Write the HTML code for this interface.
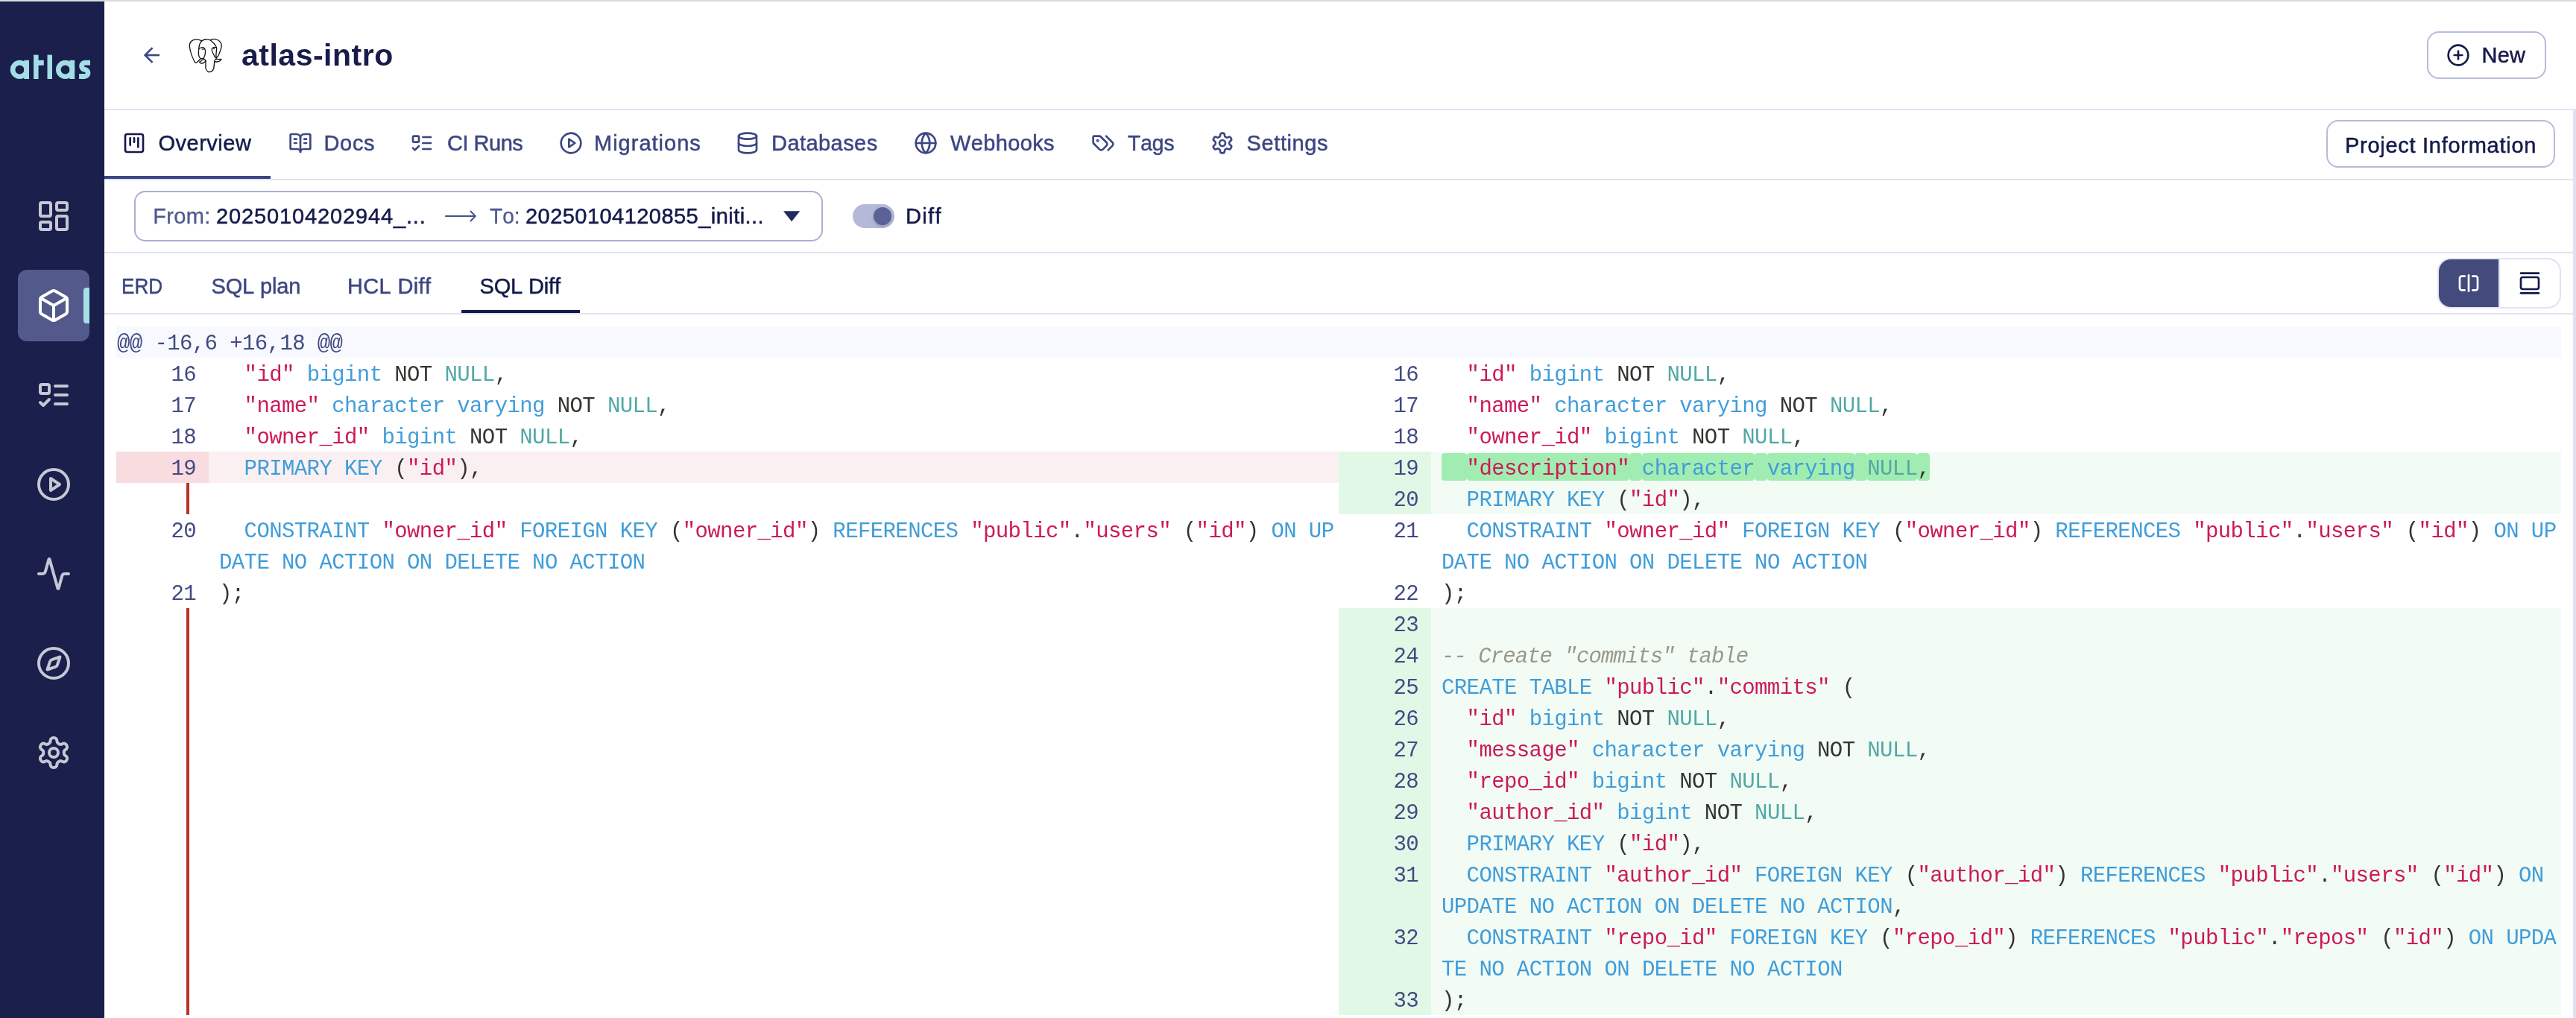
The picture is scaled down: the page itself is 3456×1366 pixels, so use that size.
<!DOCTYPE html><html><head><meta charset="utf-8"><title>atlas-intro</title><style>

html,body{margin:0;padding:0;background:#fff;}
body{width:3456px;height:1366px;overflow:hidden;position:relative;font-family:"Liberation Sans",sans-serif;}
.a{position:absolute;}
.t{position:absolute;white-space:pre;font-kerning:none;line-height:80px;font-family:"Liberation Sans",sans-serif;}
svg{position:absolute;overflow:visible;}
.ic{fill:none;stroke-linecap:round;stroke-linejoin:round;stroke-width:2;}
.hl{position:absolute;height:1px;left:140px;background:#e1e3f3;}
.row{position:absolute;left:156px;width:3280px;}
.g{position:absolute;top:0;height:100%;width:124px;}
.c{position:absolute;top:0;height:100%;width:1516px;}
.n{position:absolute;top:0;right:17px;text-align:right;}
.m{font-family:"Liberation Mono",monospace;font-size:29px;letter-spacing:-0.6028px;line-height:42px;white-space:pre;font-kerning:none;}
.code{position:absolute;left:14px;top:3px;color:#33352f;}
.k{color:#419dd9}.s{color:#cc195a}.o{color:#33352f}.b{color:#52a8a6}.cm{color:#99998a;font-style:italic;letter-spacing:-0.9528px}

</style></head><body><div id="w" style="position:absolute;left:0;top:0;width:3456px;height:1366px;will-change:transform">
<div class="a" style="left:0;top:0;width:3456px;height:2px;background:#dadada"></div>
<div class="a" style="left:0;top:2px;width:140px;height:1364px;background:#1a1f4b"></div>
<svg style="left:0;top:0" width="140" height="140" viewBox="0 0 140 140">
<g fill="none" stroke="#a3dde6" stroke-width="6.6">
<circle cx="26.4" cy="93.4" r="9.3"/><circle cx="87.6" cy="93.4" r="9.3"/>
<path stroke-width="6.8" d="M121 84.2H114.2A4.58 4.58 0 0 0 112.4 93L115.2 93.7A4.58 4.58 0 0 1 113.4 102.5H106.1"/>
</g>
<g fill="#a3dde6">
<rect x="32.3" y="80.8" width="6.7" height="25.2"/><rect x="93.5" y="80.8" width="6.7" height="25.2"/>
<rect x="45.1" y="73.6" width="6.5" height="32.4"/><rect x="45.1" y="80.8" width="13.7" height="6.9"/>
<rect x="63.5" y="73.6" width="6.5" height="32.4"/>
</g></svg>
<div class="a" style="left:24px;top:362px;width:96px;height:96px;border-radius:12px;background:#535a8b"></div>
<div class="a" style="left:112px;top:386px;width:8px;height:48px;border-radius:4px 0 0 4px;background:#a5dfe8"></div>
<svg class="ic" style="left:48px;top:266px;stroke:#c5c7d3;color:#c5c7d3;stroke-width:2" width="48" height="48" viewBox="0 0 24 24"><rect width="7" height="9" x="3" y="3" rx="1"/><rect width="7" height="5" x="14" y="3" rx="1"/><rect width="7" height="9" x="14" y="12" rx="1"/><rect width="7" height="5" x="3" y="16" rx="1"/></svg>
<svg class="ic" style="left:48px;top:386px;stroke:#ffffff;color:#ffffff;stroke-width:2" width="48" height="48" viewBox="0 0 24 24"><path d="M21 8a2 2 0 0 0-1-1.73l-7-4a2 2 0 0 0-2 0l-7 4A2 2 0 0 0 3 8v8a2 2 0 0 0 1 1.73l7 4a2 2 0 0 0 2 0l7-4A2 2 0 0 0 21 16Z"/><path d="m3.3 7 8.7 5 8.7-5"/><path d="M12 22V12"/></svg>
<svg class="ic" style="left:48px;top:506px;stroke:#c5c7d3;color:#c5c7d3;stroke-width:2" width="48" height="48" viewBox="0 0 24 24"><rect x="3" y="5" width="6" height="6" rx="1"/><path d="m3 17 2 2 4-4"/><path d="M13 6h8"/><path d="M13 12h8"/><path d="M13 18h8"/></svg>
<svg class="ic" style="left:48px;top:626px;stroke:#c5c7d3;color:#c5c7d3;stroke-width:2" width="48" height="48" viewBox="0 0 24 24"><circle cx="12" cy="12" r="10"/><polygon points="10 8 16 12 10 16 10 8"/></svg>
<svg class="ic" style="left:48px;top:746px;stroke:#c5c7d3;color:#c5c7d3;stroke-width:2" width="48" height="48" viewBox="0 0 24 24"><path d="M22 12h-2.48a2 2 0 0 0-1.93 1.46l-2.35 8.36a.25.25 0 0 1-.48 0L9.24 2.18a.25.25 0 0 0-.48 0l-2.35 8.36A2 2 0 0 1 4.49 12H2"/></svg>
<svg class="ic" style="left:48px;top:866px;stroke:#c5c7d3;color:#c5c7d3;stroke-width:2" width="48" height="48" viewBox="0 0 24 24"><path d="m16.24 7.76-1.804 5.411a2 2 0 0 1-1.265 1.265L7.76 16.24l1.804-5.411a2 2 0 0 1 1.265-1.265z"/><circle cx="12" cy="12" r="10"/></svg>
<svg class="ic" style="left:48px;top:986px;stroke:#c5c7d3;color:#c5c7d3;stroke-width:2" width="48" height="48" viewBox="0 0 24 24"><path d="M12.22 2h-.44a2 2 0 0 0-2 2v.18a2 2 0 0 1-1 1.73l-.43.25a2 2 0 0 1-2 0l-.15-.08a2 2 0 0 0-2.73.73l-.22.38a2 2 0 0 0 .73 2.73l.15.1a2 2 0 0 1 1 1.72v.51a2 2 0 0 1-1 1.74l-.15.09a2 2 0 0 0-.73 2.73l.22.38a2 2 0 0 0 2.73.73l.15-.08a2 2 0 0 1 2 0l.43.25a2 2 0 0 1 1 1.73V20a2 2 0 0 0 2 2h.44a2 2 0 0 0 2-2v-.18a2 2 0 0 1 1-1.73l.43-.25a2 2 0 0 1 2 0l.15.08a2 2 0 0 0 2.73-.73l.22-.39a2 2 0 0 0-.73-2.73l-.15-.08a2 2 0 0 1-1-1.74v-.5a2 2 0 0 1 1-1.74l.15-.09a2 2 0 0 0 .73-2.73l-.22-.38a2 2 0 0 0-2.73-.73l-.15.08a2 2 0 0 1-2 0l-.43-.25a2 2 0 0 1-1-1.73V4a2 2 0 0 0-2-2z"/><circle cx="12" cy="12" r="3"/></svg>
<svg class="ic" style="left:187.7px;top:57.7px;stroke:#3e4888;stroke-width:2;stroke-linecap:butt;stroke-linejoin:miter" width="32" height="32" viewBox="0 0 24 24"><path d="m12.4 19.4-7.4-7.4 7.4-7.4"/><path d="M19.6 12H5"/></svg>
<svg style="left:0;top:0" width="340" height="140" viewBox="0 0 340 140"><g fill="none" stroke="#111" stroke-width="1.3" stroke-linecap="round" stroke-linejoin="round">
<path d="M270.9 54.8C267 53 262 52.6 259.5 53.6C256 55 254 58.5 254.4 62.5C255 68 257.5 76 260.6 82C261.5 83.8 262.6 84.6 263.6 84C265.5 82.8 267.5 80.5 269 78.8"/>
<path d="M270.9 54.8C268.5 57 267.2 60.5 266.9 64C266.4 68 266.2 71 266.5 73.5C266.9 76 268 78 269.6 78.6C270.6 78.9 271.6 78.7 272.4 78.4"/>
<path d="M270.9 54.8C273 53.2 275.5 52.6 278 52.8C280 52.9 281.8 53.4 283 54.4C285.5 56.3 288 59 289.6 61.8C290.4 63.2 290.7 64.5 290.6 66C290.4 69 289.8 72 289.9 75L290.4 78"/>
<path d="M282.8 53.4C284.5 52.4 287 52.2 289 52.6C292 53.2 294.6 54.8 296 57.2C297.5 59.6 297.3 62.5 296.4 65.6C295.4 69 294.2 72.5 292.6 75.2C291.9 76.4 291 77.2 290.2 77.6"/>
<path d="M267.2 65.3C268.4 64.2 270.5 63.6 272.4 63.7C273.8 63.9 274.8 65.4 275.3 67.4C275.8 69.4 275.6 71.6 275 73.6C274.3 75.8 273.3 78 272.4 79.9"/>
<path d="M271.2 66.2L273.2 65.9"/>
<path d="M289.6 63.4C288 63.4 286 63.8 284.7 64.5C284.2 65.5 284.2 67 284.5 68.4C285.6 71.4 287.6 75 289 77.6"/>
<path d="M286.3 64.6L287.4 65.6"/>
<path d="M272.3 79.9C271 81.2 269 82.2 267.6 83.2C268 84.4 269.5 85 271 85C273 84.9 274.8 83.6 275.9 82.2C275.6 80.8 274.8 79.6 273.7 79.2"/>
<path d="M276.1 81.3C276 84.5 275.7 88 275.9 91C276.2 93.4 277.4 95.2 279 96.1C280.4 96.9 282 96.5 283.6 95.8C285.2 95.2 286.2 93.8 286.7 92C287.4 88.6 287.4 84.6 287.9 81.4C288.3 80.2 289.2 79.4 290.2 79.1"/>
<path d="M290.2 79.1C292.4 79.8 295 79.6 297 79.4C296.6 80.8 295.2 81.8 293.8 82.4C292 83.1 290 83.1 288.1 82.9"/>
</g></svg>
<div class="a" style="left:140px;top:146px;width:3316px;height:2px;background:#e1e3f3"></div>
<div class="a" style="left:140px;top:240px;width:3312px;height:2px;background:#e1e3f3"></div>
<div class="a" style="left:140px;top:338px;width:3312px;height:2px;background:#e1e3f3"></div>
<div class="a" style="left:140px;top:420px;width:3312px;height:2px;background:#e1e3f3"></div>
<div class="a" style="left:3452px;top:146px;width:4px;height:1220px;background:#e0e2f2"></div>
<div class="a" style="left:140px;top:236px;width:223px;height:4px;background:#3d4684"></div>
<div class="a" style="left:619px;top:416px;width:159px;height:4px;background:#141a4a"></div>
<svg class="ic" style="left:164px;top:176px;stroke:#141a4a;color:#141a4a;stroke-width:2" width="32" height="32" viewBox="0 0 24 24"><rect width="18" height="18" x="3" y="3" rx="2"/><path d="M8 7v7"/><path d="M12 7v4"/><path d="M16 7v9"/></svg>
<svg class="ic" style="left:386.7px;top:176px;stroke:#3c4682;color:#3c4682;stroke-width:2" width="32" height="32" viewBox="0 0 24 24"><path d="M12 7v14"/><path d="M16 12h2"/><path d="M16 8h2"/><path d="M3 18a1 1 0 0 1-1-1V4a1 1 0 0 1 1-1h5a4 4 0 0 1 4 4 4 4 0 0 1 4-4h5a1 1 0 0 1 1 1v13a1 1 0 0 1-1 1h-6a3 3 0 0 0-3 3 3 3 0 0 0-3-3z"/><path d="M6 12h2"/><path d="M6 8h2"/></svg>
<svg class="ic" style="left:550.3px;top:176px;stroke:#3c4682;color:#3c4682;stroke-width:2" width="32" height="32" viewBox="0 0 24 24"><rect x="3" y="5" width="6" height="6" rx="1"/><path d="m3 17 2 2 4-4"/><path d="M13 6h8"/><path d="M13 12h8"/><path d="M13 18h8"/></svg>
<svg class="ic" style="left:749.7px;top:176px;stroke:#3c4682;color:#3c4682;stroke-width:2" width="32" height="32" viewBox="0 0 24 24"><circle cx="12" cy="12" r="10"/><polygon points="10 8 16 12 10 16 10 8"/></svg>
<svg class="ic" style="left:987.3px;top:176px;stroke:#3c4682;color:#3c4682;stroke-width:2" width="32" height="32" viewBox="0 0 24 24"><ellipse cx="12" cy="5" rx="9" ry="3"/><path d="M3 5V19A9 3 0 0 0 21 19V5"/><path d="M3 12A9 3 0 0 0 21 12"/></svg>
<svg class="ic" style="left:1225.7px;top:176px;stroke:#3c4682;color:#3c4682;stroke-width:2" width="32" height="32" viewBox="0 0 24 24"><circle cx="12" cy="12" r="10"/><path d="M12 2a14.5 14.5 0 0 0 0 20 14.5 14.5 0 0 0 0-20"/><path d="M2 12h20"/></svg>
<svg class="ic" style="left:1463.8px;top:176px;stroke:#3c4682;color:#3c4682;stroke-width:2" width="32" height="32" viewBox="0 0 24 24"><path d="m15 5 6.3 6.3a2.4 2.4 0 0 1 0 3.4L17 19"/><path d="M9.586 5.586A2 2 0 0 0 8.172 5H3a1 1 0 0 0-1 1v5.172a2 2 0 0 0 .586 1.414L8.29 18.29a2.426 2.426 0 0 0 3.42 0l3.58-3.58a2.426 2.426 0 0 0 0-3.42z"/><circle cx="6.5" cy="9.5" r=".5" fill="currentColor"/></svg>
<svg class="ic" style="left:1624px;top:176px;stroke:#3c4682;color:#3c4682;stroke-width:2" width="32" height="32" viewBox="0 0 24 24"><path d="M12.22 2h-.44a2 2 0 0 0-2 2v.18a2 2 0 0 1-1 1.73l-.43.25a2 2 0 0 1-2 0l-.15-.08a2 2 0 0 0-2.73.73l-.22.38a2 2 0 0 0 .73 2.73l.15.1a2 2 0 0 1 1 1.72v.51a2 2 0 0 1-1 1.74l-.15.09a2 2 0 0 0-.73 2.73l.22.38a2 2 0 0 0 2.73.73l.15-.08a2 2 0 0 1 2 0l.43.25a2 2 0 0 1 1 1.73V20a2 2 0 0 0 2 2h.44a2 2 0 0 0 2-2v-.18a2 2 0 0 1 1-1.73l.43-.25a2 2 0 0 1 2 0l.15.08a2 2 0 0 0 2.73-.73l.22-.39a2 2 0 0 0-.73-2.73l-.15-.08a2 2 0 0 1-1-1.74v-.5a2 2 0 0 1 1-1.74l.15-.09a2 2 0 0 0 .73-2.73l-.22-.38a2 2 0 0 0-2.73-.73l-.15.08a2 2 0 0 1-2 0l-.43-.25a2 2 0 0 1-1-1.73V4a2 2 0 0 0-2-2z"/><circle cx="12" cy="12" r="3"/></svg>
<div class="a" style="left:3256px;top:42px;width:156px;height:60px;border:2px solid #b5bbdb;border-radius:16px"></div>
<svg class="ic" style="left:3282px;top:58px;stroke:#141a4a;color:#141a4a;stroke-width:2" width="32" height="32" viewBox="0 0 24 24"><circle cx="12" cy="12" r="10"/><path d="M8 12h8"/><path d="M12 8v8"/></svg>
<div class="a" style="left:3121px;top:161px;width:303px;height:60px;border:2px solid #b5bbdb;border-radius:16px"></div>
<div class="a" style="left:180px;top:256px;width:920px;height:64px;border:2px solid #a9b0d5;border-radius:15px"></div>
<svg style="left:590px;top:270px" width="60" height="40" viewBox="590 270 60 40"><g fill="none" stroke="#46508a" stroke-width="1.9" stroke-linecap="butt" stroke-linejoin="miter"><path d="M597.2 290H638"/><path d="M631 283L637.8 290L631 297"/></g></svg>
<svg style="left:1045px;top:278px" width="34" height="24" viewBox="1045 278 34 24"><path d="M1051 283.2H1073.2L1062.1 297.2Z" fill="#232a5c"/></svg>
<div class="a" style="left:1144px;top:274px;width:56px;height:32px;border-radius:16px;background:#b5b9d9"></div>
<div class="a" style="left:1172px;top:278px;width:24px;height:24px;border-radius:12px;background:#5a6296;box-shadow:0 2px 4px rgba(40,45,90,.25)"></div>
<div class="a" style="left:3270px;top:346px;width:162px;height:64px;border:2px solid #e1e3f3;border-radius:18px;background:#fff"></div>
<div class="a" style="left:3272px;top:348px;width:80px;height:64px;border-radius:16px 0 0 16px;background:#434b7d"></div>
<div class="a" style="left:3352px;top:348px;width:2px;height:64px;background:#e1e3f3"></div>
<svg class="ic" style="left:3296px;top:364px;stroke:#ffffff;color:#ffffff;stroke-width:2" width="32" height="32" viewBox="0 0 24 24"><path d="M8 19H5c-1 0-2-1-2-2V7c0-1 1-2 2-2h3"/><path d="M16 5h3c1 0 2 1 2 2v10c0 1-1 2-2 2h-3"/><line x1="12" x2="12" y1="4" y2="20"/></svg>
<svg class="ic" style="left:3378px;top:364px;stroke:#141a4a;color:#141a4a;stroke-width:2" width="32" height="32" viewBox="0 0 24 24"><path d="M3 2h18"/><rect width="18" height="12" x="3" y="6" rx="2"/><path d="M3 22h18"/></svg>
<div class="t" style="left:324.00px;top:34.00px;font-size:41px;font-weight:700;color:#171c4a;letter-spacing:0.500px;">atlas-intro</div>
<div class="t" style="left:212.50px;top:151.50px;font-size:29px;font-weight:400;color:#141a4a;letter-spacing:0.500px;-webkit-text-stroke:0.5px #141a4a;">Overview</div>
<div class="t" style="left:434.50px;top:151.50px;font-size:29px;font-weight:400;color:#3c4682;letter-spacing:0.667px;-webkit-text-stroke:0.5px #3c4682;">Docs</div>
<div class="t" style="left:600.00px;top:151.50px;font-size:29px;font-weight:400;color:#3c4682;letter-spacing:-0.500px;-webkit-text-stroke:0.5px #3c4682;">CI Runs</div>
<div class="t" style="left:797.00px;top:151.50px;font-size:29px;font-weight:400;color:#3c4682;letter-spacing:1.000px;-webkit-text-stroke:0.5px #3c4682;">Migrations</div>
<div class="t" style="left:1035.00px;top:151.50px;font-size:29px;font-weight:400;color:#3c4682;letter-spacing:0.438px;-webkit-text-stroke:0.5px #3c4682;">Databases</div>
<div class="t" style="left:1275.00px;top:151.50px;font-size:29px;font-weight:400;color:#3c4682;letter-spacing:0.357px;-webkit-text-stroke:0.5px #3c4682;">Webhooks</div>
<div class="t" style="left:1513.00px;top:151.50px;font-size:29px;font-weight:400;color:#3c4682;letter-spacing:0.000px;-webkit-text-stroke:0.5px #3c4682;transform:scaleX(0.9688);transform-origin:0 0;">Tags</div>
<div class="t" style="left:1672.60px;top:151.50px;font-size:29px;font-weight:400;color:#3c4682;letter-spacing:0.586px;-webkit-text-stroke:0.5px #3c4682;">Settings</div>
<div class="t" style="left:3329.50px;top:34.00px;font-size:29px;font-weight:400;color:#141a4a;letter-spacing:0.250px;-webkit-text-stroke:0.5px #141a4a;">New</div>
<div class="t" style="left:3146.00px;top:154.50px;font-size:29px;font-weight:400;color:#141a4a;letter-spacing:0.722px;-webkit-text-stroke:0.5px #141a4a;">Project Information</div>
<div class="t" style="left:205.30px;top:249.50px;font-size:29px;font-weight:400;color:#4f598e;letter-spacing:0.325px;-webkit-text-stroke:0.3px #4f598e;">From:</div>
<div class="t" style="left:290.00px;top:249.50px;font-size:29px;font-weight:400;color:#141a4a;letter-spacing:0.865px;-webkit-text-stroke:0.5px #141a4a;">20250104202944_...</div>
<div class="t" style="left:656.50px;top:249.50px;font-size:29px;font-weight:400;color:#4f598e;letter-spacing:0.000px;-webkit-text-stroke:0.3px #4f598e;transform:scaleX(0.9675);transform-origin:0 0;">To:</div>
<div class="t" style="left:705.00px;top:249.50px;font-size:29px;font-weight:400;color:#141a4a;letter-spacing:0.455px;-webkit-text-stroke:0.5px #141a4a;">20250104120855_initi...</div>
<div class="t" style="left:1215.00px;top:249.50px;font-size:29px;font-weight:400;color:#141a4a;letter-spacing:1.333px;-webkit-text-stroke:0.5px #141a4a;">Diff</div>
<div class="t" style="left:163.20px;top:344.00px;font-size:29px;font-weight:400;color:#3c4682;letter-spacing:0.000px;-webkit-text-stroke:0.5px #3c4682;transform:scaleX(0.8983);transform-origin:0 0;">ERD</div>
<div class="t" style="left:283.50px;top:344.00px;font-size:29px;font-weight:400;color:#3c4682;letter-spacing:-0.143px;-webkit-text-stroke:0.5px #3c4682;">SQL plan</div>
<div class="t" style="left:466.00px;top:344.00px;font-size:29px;font-weight:400;color:#3c4682;letter-spacing:0.357px;-webkit-text-stroke:0.5px #3c4682;">HCL Diff</div>
<div class="t" style="left:643.50px;top:344.00px;font-size:29px;font-weight:400;color:#141a4a;letter-spacing:-0.143px;-webkit-text-stroke:0.5px #141a4a;">SQL Diff</div>
<div class="row" style="top:438px;height:42px;background:#f8f9fe"><div class="m code" style="left:1px;color:#424a84">@@ -16,6 +16,18 @@</div></div>
<div class="row" style="top:480px;height:42px">
<div class="g" style="left:0px;"><div class="m n" style="color:#424a84;top:3px">16</div></div>
<div class="c" style="left:124px;"><div class="m code">  <span class="s">"id"</span> <span class="k">bigint</span> <span class="o">NOT</span> <span class="b">NULL</span>,</div></div>
<div class="g" style="left:1640px;"><div class="m n" style="color:#424a84;top:3px">16</div></div>
<div class="c" style="left:1764px;"><div class="m code">  <span class="s">"id"</span> <span class="k">bigint</span> <span class="o">NOT</span> <span class="b">NULL</span>,</div></div>
</div>
<div class="row" style="top:522px;height:42px">
<div class="g" style="left:0px;"><div class="m n" style="color:#424a84;top:3px">17</div></div>
<div class="c" style="left:124px;"><div class="m code">  <span class="s">"name"</span> <span class="k">character</span> <span class="k">varying</span> <span class="o">NOT</span> <span class="b">NULL</span>,</div></div>
<div class="g" style="left:1640px;"><div class="m n" style="color:#424a84;top:3px">17</div></div>
<div class="c" style="left:1764px;"><div class="m code">  <span class="s">"name"</span> <span class="k">character</span> <span class="k">varying</span> <span class="o">NOT</span> <span class="b">NULL</span>,</div></div>
</div>
<div class="row" style="top:564px;height:42px">
<div class="g" style="left:0px;"><div class="m n" style="color:#424a84;top:3px">18</div></div>
<div class="c" style="left:124px;"><div class="m code">  <span class="s">"owner_id"</span> <span class="k">bigint</span> <span class="o">NOT</span> <span class="b">NULL</span>,</div></div>
<div class="g" style="left:1640px;"><div class="m n" style="color:#424a84;top:3px">18</div></div>
<div class="c" style="left:1764px;"><div class="m code">  <span class="s">"owner_id"</span> <span class="k">bigint</span> <span class="o">NOT</span> <span class="b">NULL</span>,</div></div>
</div>
<div class="row" style="top:606px;height:42px">
<div class="g" style="left:0px;background:#f8dcdf"><div class="m n" style="color:#424a84;top:3px">19</div></div>
<div class="c" style="left:124px;background:#faf0f2"><div class="m code">  <span class="k">PRIMARY</span> <span class="k">KEY</span> (<span class="s">"id"</span>),</div></div>
<div class="g" style="left:1640px;background:#e2f8e7"><div class="m n" style="color:#424a84;top:3px">19</div></div>
<div class="c" style="left:1764px;background:#f2fcf5"><div class="a" style="left:14.00px;top:2px;width:33.60px;height:37px;border-radius:4px;background:#a1edb1"></div><div class="a" style="left:47.60px;top:2px;width:218.40px;height:37px;border-radius:4px;background:#a1edb1"></div><div class="a" style="left:266.00px;top:2px;width:16.80px;height:37px;border-radius:4px;background:#a1edb1"></div><div class="a" style="left:282.80px;top:2px;width:151.20px;height:37px;border-radius:4px;background:#a1edb1"></div><div class="a" style="left:434.00px;top:2px;width:16.80px;height:37px;border-radius:4px;background:#a1edb1"></div><div class="a" style="left:450.80px;top:2px;width:117.60px;height:37px;border-radius:4px;background:#a1edb1"></div><div class="a" style="left:568.40px;top:2px;width:16.80px;height:37px;border-radius:4px;background:#a1edb1"></div><div class="a" style="left:585.20px;top:2px;width:67.20px;height:37px;border-radius:4px;background:#a1edb1"></div><div class="a" style="left:652.40px;top:2px;width:16.80px;height:37px;border-radius:4px;background:#a1edb1"></div><div class="m code">  <span class="s">"description"</span> <span class="k">character</span> <span class="k">varying</span> <span class="b">NULL</span>,</div></div>
</div>
<div class="row" style="top:648px;height:42px">
<div class="a" style="left:94px;top:0;width:4px;height:42px;background:#b83325"></div>
<div class="g" style="left:1640px;background:#e2f8e7"><div class="m n" style="color:#424a84;top:3px">20</div></div>
<div class="c" style="left:1764px;background:#f2fcf5"><div class="m code">  <span class="k">PRIMARY</span> <span class="k">KEY</span> (<span class="s">"id"</span>),</div></div>
</div>
<div class="row" style="top:690px;height:84px">
<div class="g" style="left:0px;"><div class="m n" style="color:#424a84;top:3px">20</div></div>
<div class="c" style="left:124px;"><div class="m code">  <span class="k">CONSTRAINT</span> <span class="s">"owner_id"</span> <span class="k">FOREIGN</span> <span class="k">KEY</span> (<span class="s">"owner_id"</span>) <span class="k">REFERENCES</span> <span class="s">"public"</span>.<span class="s">"users"</span> (<span class="s">"id"</span>) <span class="k">ON</span> <span class="k">UP</span>
<span class="k">DATE</span> <span class="k">NO</span> <span class="k">ACTION</span> <span class="k">ON</span> <span class="k">DELETE</span> <span class="k">NO</span> <span class="k">ACTION</span></div></div>
<div class="g" style="left:1640px;"><div class="m n" style="color:#424a84;top:3px">21</div></div>
<div class="c" style="left:1764px;"><div class="m code">  <span class="k">CONSTRAINT</span> <span class="s">"owner_id"</span> <span class="k">FOREIGN</span> <span class="k">KEY</span> (<span class="s">"owner_id"</span>) <span class="k">REFERENCES</span> <span class="s">"public"</span>.<span class="s">"users"</span> (<span class="s">"id"</span>) <span class="k">ON</span> <span class="k">UP</span>
<span class="k">DATE</span> <span class="k">NO</span> <span class="k">ACTION</span> <span class="k">ON</span> <span class="k">DELETE</span> <span class="k">NO</span> <span class="k">ACTION</span></div></div>
</div>
<div class="row" style="top:774px;height:42px">
<div class="g" style="left:0px;"><div class="m n" style="color:#424a84;top:3px">21</div></div>
<div class="c" style="left:124px;"><div class="m code">);</div></div>
<div class="g" style="left:1640px;"><div class="m n" style="color:#424a84;top:3px">22</div></div>
<div class="c" style="left:1764px;"><div class="m code">);</div></div>
</div>
<div class="row" style="top:816px;height:42px">
<div class="a" style="left:94px;top:0;width:4px;height:42px;background:#b83325"></div>
<div class="g" style="left:1640px;background:#e2f8e7"><div class="m n" style="color:#424a84;top:3px">23</div></div>
<div class="c" style="left:1764px;background:#f2fcf5"><div class="m code"></div></div>
</div>
<div class="row" style="top:858px;height:42px">
<div class="a" style="left:94px;top:0;width:4px;height:42px;background:#b83325"></div>
<div class="g" style="left:1640px;background:#e2f8e7"><div class="m n" style="color:#424a84;top:3px">24</div></div>
<div class="c" style="left:1764px;background:#f2fcf5"><div class="m code"><span class="cm">-- Create "commits" table</span></div></div>
</div>
<div class="row" style="top:900px;height:42px">
<div class="a" style="left:94px;top:0;width:4px;height:42px;background:#b83325"></div>
<div class="g" style="left:1640px;background:#e2f8e7"><div class="m n" style="color:#424a84;top:3px">25</div></div>
<div class="c" style="left:1764px;background:#f2fcf5"><div class="m code"><span class="k">CREATE</span> <span class="k">TABLE</span> <span class="s">"public"</span>.<span class="s">"commits"</span> (</div></div>
</div>
<div class="row" style="top:942px;height:42px">
<div class="a" style="left:94px;top:0;width:4px;height:42px;background:#b83325"></div>
<div class="g" style="left:1640px;background:#e2f8e7"><div class="m n" style="color:#424a84;top:3px">26</div></div>
<div class="c" style="left:1764px;background:#f2fcf5"><div class="m code">  <span class="s">"id"</span> <span class="k">bigint</span> <span class="o">NOT</span> <span class="b">NULL</span>,</div></div>
</div>
<div class="row" style="top:984px;height:42px">
<div class="a" style="left:94px;top:0;width:4px;height:42px;background:#b83325"></div>
<div class="g" style="left:1640px;background:#e2f8e7"><div class="m n" style="color:#424a84;top:3px">27</div></div>
<div class="c" style="left:1764px;background:#f2fcf5"><div class="m code">  <span class="s">"message"</span> <span class="k">character</span> <span class="k">varying</span> <span class="o">NOT</span> <span class="b">NULL</span>,</div></div>
</div>
<div class="row" style="top:1026px;height:42px">
<div class="a" style="left:94px;top:0;width:4px;height:42px;background:#b83325"></div>
<div class="g" style="left:1640px;background:#e2f8e7"><div class="m n" style="color:#424a84;top:3px">28</div></div>
<div class="c" style="left:1764px;background:#f2fcf5"><div class="m code">  <span class="s">"repo_id"</span> <span class="k">bigint</span> <span class="o">NOT</span> <span class="b">NULL</span>,</div></div>
</div>
<div class="row" style="top:1068px;height:42px">
<div class="a" style="left:94px;top:0;width:4px;height:42px;background:#b83325"></div>
<div class="g" style="left:1640px;background:#e2f8e7"><div class="m n" style="color:#424a84;top:3px">29</div></div>
<div class="c" style="left:1764px;background:#f2fcf5"><div class="m code">  <span class="s">"author_id"</span> <span class="k">bigint</span> <span class="o">NOT</span> <span class="b">NULL</span>,</div></div>
</div>
<div class="row" style="top:1110px;height:42px">
<div class="a" style="left:94px;top:0;width:4px;height:42px;background:#b83325"></div>
<div class="g" style="left:1640px;background:#e2f8e7"><div class="m n" style="color:#424a84;top:3px">30</div></div>
<div class="c" style="left:1764px;background:#f2fcf5"><div class="m code">  <span class="k">PRIMARY</span> <span class="k">KEY</span> (<span class="s">"id"</span>),</div></div>
</div>
<div class="row" style="top:1152px;height:84px">
<div class="a" style="left:94px;top:0;width:4px;height:84px;background:#b83325"></div>
<div class="g" style="left:1640px;background:#e2f8e7"><div class="m n" style="color:#424a84;top:3px">31</div></div>
<div class="c" style="left:1764px;background:#f2fcf5"><div class="m code">  <span class="k">CONSTRAINT</span> <span class="s">"author_id"</span> <span class="k">FOREIGN</span> <span class="k">KEY</span> (<span class="s">"author_id"</span>) <span class="k">REFERENCES</span> <span class="s">"public"</span>.<span class="s">"users"</span> (<span class="s">"id"</span>) <span class="k">ON</span> 
<span class="k">UPDATE</span> <span class="k">NO</span> <span class="k">ACTION</span> <span class="k">ON</span> <span class="k">DELETE</span> <span class="k">NO</span> <span class="k">ACTION</span>,</div></div>
</div>
<div class="row" style="top:1236px;height:84px">
<div class="a" style="left:94px;top:0;width:4px;height:84px;background:#b83325"></div>
<div class="g" style="left:1640px;background:#e2f8e7"><div class="m n" style="color:#424a84;top:3px">32</div></div>
<div class="c" style="left:1764px;background:#f2fcf5"><div class="m code">  <span class="k">CONSTRAINT</span> <span class="s">"repo_id"</span> <span class="k">FOREIGN</span> <span class="k">KEY</span> (<span class="s">"repo_id"</span>) <span class="k">REFERENCES</span> <span class="s">"public"</span>.<span class="s">"repos"</span> (<span class="s">"id"</span>) <span class="k">ON</span> <span class="k">UPDA</span>
<span class="k">TE</span> <span class="k">NO</span> <span class="k">ACTION</span> <span class="k">ON</span> <span class="k">DELETE</span> <span class="k">NO</span> <span class="k">ACTION</span></div></div>
</div>
<div class="row" style="top:1320px;height:42px">
<div class="a" style="left:94px;top:0;width:4px;height:42px;background:#b83325"></div>
<div class="g" style="left:1640px;background:#e2f8e7"><div class="m n" style="color:#424a84;top:3px">33</div></div>
<div class="c" style="left:1764px;background:#f2fcf5"><div class="m code">);</div></div>
</div>
</div></body></html>
